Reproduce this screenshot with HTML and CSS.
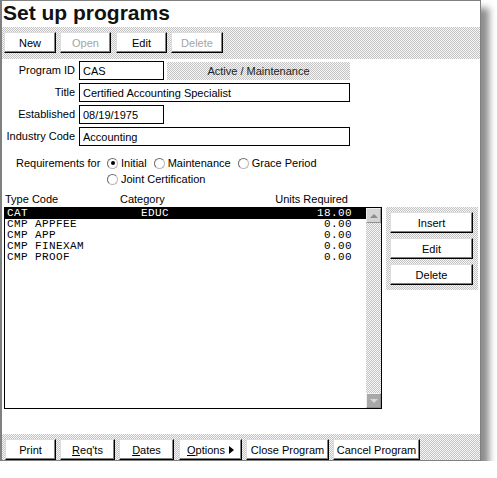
FILE: index.html
```html
<!DOCTYPE html>
<html lang="en">
<head>
    <meta charset="UTF-8">
    <title>Set up programs</title>
    <link rel="stylesheet" href="styles.css">
</head>
<body>
    <main class="window">
        <h1 class="title">Set up programs</h1>

        <div class="toolbar top-bar">
            <button class="btn" style="width:52px">New</button>
            <button class="btn" style="width:51px" disabled>Open</button>
            <button class="btn edit-top" style="width:51px">Edit</button>
            <button class="btn" style="width:52px" disabled>Delete</button>
        </div>

        <section class="content">
            <div class="fields">
                <label>Program ID</label>
                <div class="row-one">
                    <input class="field short" type="text" value="CAS" readonly>
                    <div class="status">Active / Maintenance</div>
                </div>
                <label>Title</label>
                <input class="field" type="text" value="Certified Accounting Specialist" readonly>
                <label>Established</label>
                <input class="field short" type="text" value="08/19/1975" readonly>
                <label>Industry Code</label>
                <input class="field" type="text" value="Accounting" readonly>
            </div>

            <div class="reqs">
                <span class="reqs-label">Requirements for</span>
                <div class="radios">
                    <span class="radio checked"><i></i>Initial</span>
                    <span class="radio"><i></i>Maintenance</span>
                    <span class="radio"><i></i>Grace Period</span>
                    <span class="radio"><i></i>Joint Certification</span>
                </div>
            </div>

            <div class="list-head">
                <span>Type Code</span>
                <span>Category</span>
                <span>Units Required</span>
            </div>

            <div class="list-area">
                <div class="list">
                    <div class="rows">
                        <div class="row selected"><span>CAT</span><span>EDUC</span><span>18.00</span></div>
                        <div class="row"><span>CMP APPFEE</span><span></span><span>0.00</span></div>
                        <div class="row"><span>CMP APP</span><span></span><span>0.00</span></div>
                        <div class="row"><span>CMP FINEXAM</span><span></span><span>0.00</span></div>
                        <div class="row"><span>CMP PROOF</span><span></span><span>0.00</span></div>
                    </div>
                    <div class="scrollbar">
                        <span class="arrow up"></span>
                        <span class="arrow down"></span>
                    </div>
                </div>
                <div class="side">
                    <button class="btn">Insert</button>
                    <button class="btn">Edit</button>
                    <button class="btn">Delete</button>
                </div>
            </div>
        </section>

        <div class="toolbar bottom-bar">
            <button class="btn" style="width:51px">Print</button>
            <button class="btn" style="width:55px"><span><u>R</u>eq'ts</span></button>
            <button class="btn" style="width:55px"><span><u>D</u>ates</span></button>
            <button class="btn options" style="width:63px"><span><u>O</u>ptions</span><span class="tri"></span></button>
            <button class="btn" style="width:83px">Close Program</button>
            <button class="btn" style="width:87px">Cancel Program</button>
        </div>
    </main>
</body>
</html>
```
FILE: styles.css
```css
:root{
    --border: #808080;
    --hatch: repeating-conic-gradient(#c4c4c4 0 25%, #f6f6f6 0 50%) 0 0/2px 2px;
}
*{
    box-sizing: border-box;
    margin: 0;
    padding: 0;
}
body{
    background: #fff;
    font-family: "Liberation Sans", Arial, sans-serif;
    font-size: 11px;
    color: #000;
}
.window{
    width: 481px;
    height: 461px;
    border: 1px solid var(--border);
    border-left-width: 2px;
    background: #fff;
    display: flex;
    flex-direction: column;
    box-shadow: 8px 8px 7px rgba(0,0,0,0.45);
}
.title{
    height: 26px;
    line-height: 23px;
    padding-left: 1px;
    font-size: 21px;
    font-weight: 700;
    color: #111;
}
.toolbar{
    display: flex;
    gap: 4px;
    background: var(--hatch);
}
.top-bar{
    height: 32px;
    padding: 5px 0 0 2px;
}
.edit-top{
    margin-left: 1px;
}
.bottom-bar{
    height: 26px;
    padding: 5px 0 0 3px;
}
.bottom-bar .options{
    margin-left: 1px;
}
.btn{
    height: 21px;
    background: #fff;
    border: 1px solid;
    border-color: #dcdcdc #000 #000 #dcdcdc;
    box-shadow: inset -1px -1px #808080;
    font-family: inherit;
    font-size: 11px;
    color: #000;
    display: flex;
    align-items: center;
    justify-content: center;
    gap: 4px;
}
.btn:disabled{
    color: #a4a4a4;
}
.tri{
    width: 0;
    height: 0;
    border-top: 4px solid transparent;
    border-bottom: 4px solid transparent;
    border-left: 5px solid #000;
}
.content{
    flex: 1;
    padding-top: 2px;
}
.fields{
    display: grid;
    grid-template-columns: 73px 271px;
    column-gap: 4px;
    row-gap: 3px;
}
.fields label{
    text-align: right;
    line-height: 19px;
}
.field{
    height: 19px;
    border: 1px solid #000;
    padding-left: 3px;
    font-family: inherit;
    font-size: 11px;
    color: #000;
    outline: none;
}
.short{
    width: 85px;
}
.row-one{
    display: flex;
    gap: 3px;
}
.status{
    flex: 1;
    height: 18px;
    margin-top: 1px;
    background: var(--hatch);
    text-align: center;
    line-height: 18px;
    color: #222;
}
.reqs{
    display: flex;
    margin-top: 9px;
    line-height: 16px;
}
.reqs-label{
    width: 91px;
    margin-left: 14px;
    flex-shrink: 0;
}
.radios{
    width: 243px;
    display: flex;
    flex-wrap: wrap;
    column-gap: 7px;
}
.radio{
    display: flex;
    align-items: center;
    gap: 3px;
}
.radio i{
    width: 11px;
    height: 11px;
    border-radius: 50%;
    border: 1px solid #6a6a6a;
    border-right-color: #b8b8b8;
    border-bottom-color: #b8b8b8;
    background: #fff;
    display: flex;
    align-items: center;
    justify-content: center;
}
.radio.checked i::after{
    content: "";
    width: 4px;
    height: 4px;
    border-radius: 50%;
    background: #000;
}
.list-head{
    display: grid;
    grid-template-columns: 115px 1fr auto;
    width: 379px;
    margin-top: 6px;
    padding: 0 33px 0 3px;
    height: 14px;
    line-height: 13px;
}
.list-area{
    display: flex;
    gap: 4px;
    margin-left: 2px;
}
.list{
    width: 378px;
    height: 202px;
    border: 1px solid #000;
    display: flex;
}
.rows{
    flex: 1;
    font-family: "Liberation Mono", "DejaVu Sans Mono", monospace;
    font-size: 11px;
    letter-spacing: 0.4px;
}
.row{
    display: grid;
    grid-template-columns: 134px 1fr auto;
    height: 11px;
    line-height: 11px;
    padding: 0 14px 0 2px;
    white-space: pre;
}
.row.selected{
    background: #000;
    color: #fff;
}
.scrollbar{
    width: 15px;
    background: var(--hatch);
    display: flex;
    flex-direction: column;
    justify-content: space-between;
}
.arrow{
    height: 15px;
    display: flex;
    align-items: center;
    justify-content: center;
    border: 1px solid #f0f0f0;
    border-right-color: #909090;
    border-bottom-color: #909090;
}
.arrow.up{
    background: #d4d4d4;
}
.arrow.down{
    background: #a8a8a8;
}
.arrow::after{
    content: "";
    width: 0;
    height: 0;
    border-left: 4px solid transparent;
    border-right: 4px solid transparent;
}
.arrow.up::after{
    border-bottom: 4px solid #8c8c8c;
}
.arrow.down::after{
    border-top: 4px solid #d8d8d8;
}
.side{
    width: 92px;
    height: 83px;
    background: var(--hatch);
    padding: 5px 4px 4px;
    display: flex;
    flex-direction: column;
    gap: 5px;
}
.side .btn{
    width: 83px;
}
```
